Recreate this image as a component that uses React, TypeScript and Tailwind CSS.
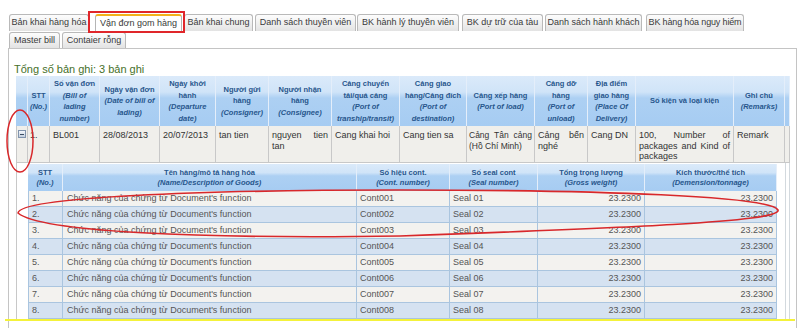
import React from "react";

const tabsTop = [
  { label: "Bản khai hàng hóa", cls: "w-[80px]" },
  { label: "Vận đơn gom hàng", cls: "w-[87px] ml-[6px]", active: true },
  { label: "Bản khai chung", cls: "w-[69px] ml-[2px]" },
  { label: "Danh sách thuyền viên", cls: "w-[101px] ml-[2px]" },
  { label: "BK hành lý thuyền viên", cls: "w-[102px] ml-[1px]" },
  { label: "BK dự trữ của tàu", cls: "w-[81px] ml-[3px]" },
  { label: "Danh sách hành khách", cls: "w-[97px] ml-[2px]" },
  { label: "BK hàng hóa nguy hiểm", cls: "w-[98px] ml-[4px] tracking-[-0.15px]" },
];

const tabsBottom = [
  { label: "Master bill", cls: "w-[51px]" },
  { label: "Contaier rỗng", cls: "w-[64px] ml-[2px]" },
];

const headCols = [
  { w: "w-[12px]", t: [], i: [] },
  { w: "w-[22px]", t: ["STT"], i: ["(No.)"] },
  { w: "w-[50px]", t: ["Số vận đơn"], i: ["(Bill of", "lading", "number)"] },
  { w: "w-[60px]", t: ["Ngày vận đơn"], i: ["(Date of bill of", "lading)"] },
  { w: "w-[56px]", t: ["Ngày khởi", "hành"], i: ["(Departure", "date)"] },
  { w: "w-[53px]", t: ["Người gửi", "hàng"], i: ["(Consigner)"] },
  { w: "w-[63px]", t: ["Người nhận", "hàng"], i: ["(Consignee)"] },
  { w: "w-[68px]", t: ["Cảng chuyển", "tải/quá cảng"], i: ["(Port of", "tranship/transit)"] },
  { w: "w-[67px]", t: ["Cảng giao", "hàng/Cảng đích"], i: ["(Port of", "destination)"] },
  { w: "w-[68px]", t: ["Cảng xếp hàng"], i: ["(Port of load)"] },
  { w: "w-[53px]", t: ["Cảng dỡ", "hàng"], i: ["(Port of", "unload)"] },
  { w: "w-[48px]", t: ["Địa điểm", "giao hàng"], i: ["(Place Of", "Delivery)"] },
  { w: "w-[98px]", t: ["Số kiện và loại kiện"], i: [] },
  { w: "w-[51px]", t: ["Ghi chú"], i: ["(Remarks)"] },
  { w: "w-[5px]", t: [], i: [] },
];

const innerCols = [
  { w: "w-[35px]", t: "STT", i: "(No.)" },
  { w: "w-[294px]", t: "Tên hàng/mô tả hàng hóa", i: "(Name/Description of Goods)" },
  { w: "w-[93px]", t: "Số hiệu cont.", i: "(Cont. number)" },
  { w: "w-[88px]", t: "Số seal cont", i: "(Seal number)" },
  { w: "w-[107px]", t: "Tổng trọng lượng", i: "(Gross weight)" },
  { w: "w-[132px]", t: "Kích thước/thể tích", i: "(Demension/tonnage)" },
];

const goods = [1, 2, 3, 4, 5, 6, 7, 8].map((n) => ({
  no: `${n}.`,
  name: "Chức năng của chứng từ Document's function",
  cont: `Cont00${n}`,
  seal: `Seal 0${n}`,
  weight: "23.2300",
  size: "23.2300",
}));

const headBg =
  "bg-[linear-gradient(to_bottom,#dbeafa_0%,#d0e4f8_32%,#add0f3_44%,#a6ccf2_100%)]";

const cell = "border-b border-r border-[#c8c8c8] px-[3px] pt-[4px] align-top";

function Tab({ label, cls, active }: { label: string; cls: string; active?: boolean }) {
  return (
    <div
      className={
        "shrink-0 whitespace-nowrap rounded-t-[3px] border border-b-0 text-center text-[9px] text-[#3a3a3a] " +
        cls +
        (active
          ? " border-[#b5b5b5] border-t-2 border-t-[#f2b21c] bg-white leading-[14px]"
          : " border-[#b9b9b9] bg-[linear-gradient(to_bottom,#fdfdfd,#e3e3e3)] leading-[15px]")
      }
    >
      {label}
    </div>
  );
}

export default function App() {
  return (
    <div className="relative h-[328px] w-[800px] overflow-hidden bg-white font-['Liberation_Sans',Arial,sans-serif]">
      {/* Tabs */}
      <div className="pl-[9px] pt-[14px]">
        <div className="flex h-[17px]">
          {tabsTop.map((t) => (
            <Tab key={t.label} {...t} />
          ))}
        </div>
        <div className="mt-[1px] flex h-[16px]">
          {tabsBottom.map((t) => (
            <Tab key={t.label} {...t} />
          ))}
        </div>
      </div>

      {/* Panel */}
      <div className="ml-[8px] h-[300px] w-[789px] border-l border-r border-t border-[#c4c4c4] pl-[7px] pt-[14px]">
        <div className="-ml-[2px] text-[11px] leading-[13px] text-[#46702a]">Tổng số bản ghi: 3 bản ghi</div>

        <table className="w-[774px] table-fixed border-separate border-spacing-0">
          <colgroup>
            {headCols.map((c, k) => (
              <col key={k} className={c.w} />
            ))}
          </colgroup>
          <thead>
            <tr className={"h-[50px] " + headBg}>
              {headCols.map((c, k) => (
                <th
                  key={k}
                  className="border-r border-[#e4eefa] px-[1px] text-center align-middle text-[7.5px] font-bold leading-[11.5px] text-[#27568c]"
                >
                  {c.t.map((l) => (
                    <div key={l} className="whitespace-nowrap">
                      {l}
                    </div>
                  ))}
                  {c.i.map((l) => (
                    <div key={l} className="whitespace-nowrap italic">
                      {l}
                    </div>
                  ))}
                </th>
              ))}
            </tr>
          </thead>
          <tbody>
            <tr className="h-[37px] bg-[#f0efeb] text-[9px] leading-[10.5px] text-[#333]">
              <td className="border-b border-l border-r border-[#c8c8c8] pl-[1px] pt-[4px] align-top">
                <div className="flex h-[8px] w-[8px] items-center justify-center border border-[#8194ad] bg-[linear-gradient(to_bottom,#f5f8fc,#c3cfdf)]">
                  <div className="h-[1px] w-[4px] bg-[#3b4d63]" />
                </div>
              </td>
              <td className="border-b border-r border-[#c8c8c8] px-[2px] pt-[4px] align-top">1.</td>
              <td className={cell}>BL001</td>
              <td className={cell}>28/08/2013</td>
              <td className={cell}>20/07/2013</td>
              <td className={cell}>tan tien</td>
              <td className={cell + " text-justify"}>nguyen tien tan</td>
              <td className={cell}>Cang khai hoi</td>
              <td className={cell}>Cang tien sa</td>
              <td className="border-b border-r border-[#c8c8c8] px-[2px] pt-[4px] align-top text-[8.5px]">
                <div className="text-justify [text-align-last:justify]">Cảng Tân cảng</div>
                <div>(Hồ Chí Minh)</div>
              </td>
              <td className={cell + " text-justify"}>Cảng bến nghé</td>
              <td className={cell}>Cang DN</td>
              <td className={cell + " text-justify"}>100, Number of packages and Kind of packages</td>
              <td className={cell}>Remark</td>
              <td className="border-b border-r border-[#c8c8c8]" />
            </tr>
            <tr>
              <td className="border-l border-[#c8c8c8] bg-white" />
              <td colSpan={13} className="bg-white p-0 pr-[8px] pt-[1px] align-top">
                <table className="w-[749px] table-fixed border-separate border-spacing-0">
                  <colgroup>
                    {innerCols.map((c) => (
                      <col key={c.t} className={c.w} />
                    ))}
                  </colgroup>
                  <thead>
                    <tr className={"h-[27px] " + headBg}>
                      {innerCols.map((c) => (
                        <th
                          key={c.t}
                          className="border-r border-[#e4eefa] text-center align-middle text-[7.5px] font-bold leading-[10px] text-[#27568c]"
                        >
                          <div>{c.t}</div>
                          <div className="italic">{c.i}</div>
                        </th>
                      ))}
                    </tr>
                  </thead>
                  <tbody className="text-[9px] text-[#555]">
                    {goods.map((g, k) => (
                      <tr key={g.no} className={"h-[16px] " + (k % 2 === 0 ? "bg-[#f3f2ef]" : "bg-[#d5e2f1]")}>
                        <td className="whitespace-nowrap border-b border-l border-r border-[#aac5df] px-[3px] leading-[15px]">
                          {g.no}
                        </td>
                        <td className="whitespace-nowrap border-b border-r border-[#aac5df] px-[4px] leading-[15px]">
                          {g.name}
                        </td>
                        <td className="whitespace-nowrap border-b border-r border-[#aac5df] px-[3px] leading-[15px]">
                          {g.cont}
                        </td>
                        <td className="whitespace-nowrap border-b border-r border-[#aac5df] px-[3px] leading-[15px]">
                          {g.seal}
                        </td>
                        <td className="whitespace-nowrap border-b border-r border-[#aac5df] px-[3px] text-right leading-[15px]">
                          {g.weight}
                        </td>
                        <td className="whitespace-nowrap border-b border-r border-[#aac5df] px-[3px] text-right leading-[15px]">
                          {g.size}
                        </td>
                      </tr>
                    ))}
                  </tbody>
                </table>
              </td>
              <td className="border-l border-r border-[#d3d9de] bg-white" />
            </tr>
          </tbody>
        </table>
      </div>

      {/* Annotations drawn on top of the screenshot */}
      <div className="pointer-events-none absolute left-[88px] top-[11px] h-[22px] w-[97px] border-2 border-[#e0262a]" />
      <svg className="pointer-events-none absolute left-0 top-0" width="800" height="328" viewBox="0 0 800 328">
        <ellipse cx="20" cy="141" rx="13" ry="31" fill="none" stroke="#d8282b" strokeWidth="1.5" />
        <path
          d="M 18 213 C 20 197, 200 190, 400 190 C 600 190, 770 196, 778 210 C 782 222, 620 228, 400 236 C 200 239, 40 232, 18 213 Z"
          fill="none"
          stroke="#d8282b"
          strokeWidth="1.6"
        />
      </svg>
      <div className="pointer-events-none absolute left-[5px] top-[319px] h-[2px] w-[790px] bg-[#f4f23a]" />
    </div>
  );
}
